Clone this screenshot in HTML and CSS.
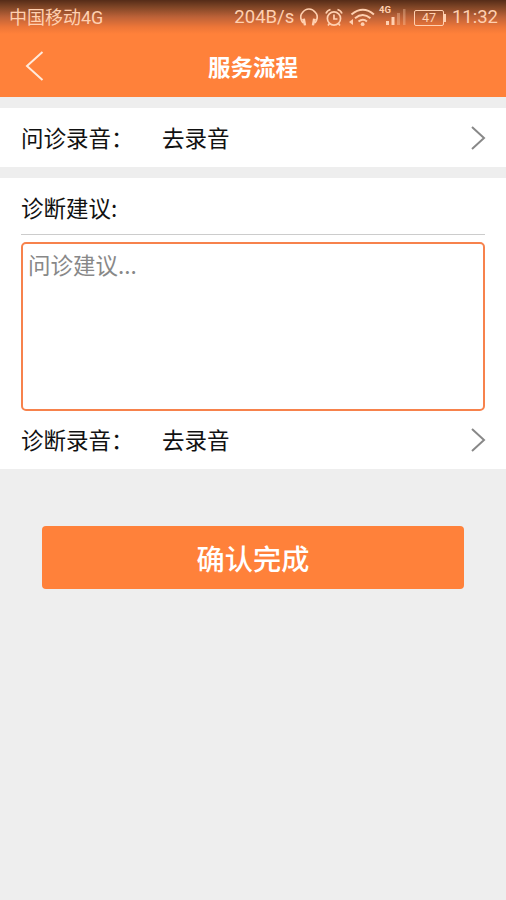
FILE: index.html
```html
<!DOCTYPE html>
<html lang="zh-CN">
<head>
<meta charset="utf-8">
<title>服务流程</title>
<link rel="stylesheet" href="styles.css">
</head>
<body>
<header class="header">
  <div class="status">
    <span class="carrier">中国移动4G</span>
    <span class="speed">204B/s</span>
    <svg class="headset" width="18" height="20" viewBox="0 0 18 20"><path d="M3 15C.2 11 .2 7 2.500 4.500C6-.2 12-.2 15.500 4.500C17.800 7 17.800 11 15 15" fill="none" stroke="currentColor" stroke-width="1.600"/><path d="M2 11l3-.6 1.200 6.800-2.300.4zM16 11l-3-.6-1.200 6.800 2.300.4z" fill="currentColor"/></svg>
    <svg class="alarm" width="18" height="20" viewBox="0 0 18 20" fill="none" stroke="currentColor" stroke-width="1.700"><circle cx="9" cy="10.500" r="6.600"/><path d="M9 6.500v4.500h3.500M1 5.500Q2 2.500 5.500 1.500M17 5.500Q16 2.500 12.500 1.500M4.500 15.500L3 17.500M13.500 15.500l1.500 2"/></svg>
    <svg class="wifi" width="26" height="20" viewBox="0 0 26 20"><path d="M2.500 6.500Q14 -3 25 6.500M6 10.200Q14 3.700 21.500 10.200M9.500 13.500Q14 10 18 13.500" fill="none" stroke="currentColor" stroke-width="2"/><circle cx="13.700" cy="16.200" r="1.900" fill="currentColor"/><path d="M0 14l4-3v6z" fill="currentColor"/></svg>
    <span class="mobile"><span class="net">4G</span><svg width="27" height="18" viewBox="0 0 27 18" fill="currentColor"><path d="M7 12h3v4H7zM12.500 8h3v8h-3z"/><path opacity=".35" d="M18 4h3v12h-3zM24 0h2.500v16H24z"/></svg></span>
    <span class="battery">47</span>
    <span class="clock">11:32</span>
  </div>
  <div class="navbar">
    <svg class="back" width="20" height="32" viewBox="0 0 20 32"><path d="M17.500 2L2 16l15.500 14" fill="none" stroke="currentColor" stroke-width="2"/></svg>
    <h1 class="title">服务流程</h1>
  </div>
</header>
<main>
  <section class="card row">
    <span class="label">问诊录音：</span><span class="value">去录音</span>
    <svg class="arrow" width="16" height="26" viewBox="0 0 16 26"><path d="M2 2l12 11L2 24"/></svg>
  </section>
  <section class="card advice">
    <label class="heading" for="advice">诊断建议:</label>
    <textarea id="advice" class="input" placeholder="问诊建议..."></textarea>
    <div class="row record">
      <span class="label">诊断录音：</span><span class="value">去录音</span>
      <svg class="arrow" width="16" height="26" viewBox="0 0 16 26"><path d="M2 2l12 11L2 24"/></svg>
    </div>
  </section>
  <button class="submit">确认完成</button>
</main>
</body>
</html>
```
FILE: styles.css
```css
* { box-sizing: border-box; }
body {
  margin: 0;
  min-height: 900px;
  background: #eee;
  color: #111;
  font: 22.5px/32px "Noto Sans CJK SC", sans-serif;
}
.header {
  height: 97px;
  background: linear-gradient(#552c18 0, #7f4526 7px, #bd6238 17px, #ed7638 27px, #ff813a 34px);
}
.status {
  display: flex;
  height: 35px;
  padding: 0 8px 0 9px;
  align-items: center;
  color: #ffd0b0;
  font: 18.5px/35px Roboto, "Noto Sans CJK SC", sans-serif;
  white-space: nowrap;
}
.carrier { width: 226px; font-size: 18px; }
.speed { width: 66px; }
.headset { margin-right: 7px; }
.alarm { margin-right: 6px; }
.wifi { margin-right: 4px; }
.mobile { position: relative; height: 18px; width: 27px; margin: 0 8px 0 0; }
.mobile svg { display: block; }
.net { position: absolute; left: 0; top: -5px; font: bold 9.5px/12px Roboto, sans-serif; }
.battery {
  position: relative;
  width: 30px;
  height: 16px;
  margin-right: 8px;
  border: 1.5px solid;
  border-radius: 2px;
  font-size: 12.5px;
  line-height: 14px;
  text-align: center;
}
.battery::after {
  content: "";
  position: absolute;
  right: -3px;
  top: 3px;
  width: 2px;
  height: 8px;
  background: currentColor;
}
.navbar {
  display: grid;
  grid-template-columns: 60px 1fr 60px;
  height: 61px;
  align-items: center;
  color: #fff;
}
.back { margin-left: 25px; color: #ffeadb; }
.title { margin: 0; text-align: center; font-size: 22.5px; font-weight: 700; }
.card { background: #fff; padding: 0 21px; margin-top: 11px; }
.row { display: flex; align-items: center; height: 59px; }
.label, .value { padding-bottom: 2px; }
.label { width: 141px; white-space: nowrap; }
.arrow { margin: 0 -1px 0 auto; fill: none; stroke: #888; stroke-width: 2; }
.advice { height: 291px; }
.record { height: 57px; }
.heading { display: block; height: 57px; line-height: 59px; border-bottom: 1px solid #ccc; }
.input {
  display: block;
  width: 100%;
  height: 169px;
  margin-top: 7px;
  padding: 4px 5px;
  border: 2px solid #f7824c;
  border-radius: 5px;
  background: #fff;
  font: inherit;
  resize: none;
  outline: 0;
}
.input::placeholder { color: #888; opacity: 1; }
.submit {
  display: block;
  width: 422px;
  height: 63px;
  margin: 56.5px auto 0;
  padding: 1px 0 0;
  border: 0;
  border-radius: 4px;
  background: #ff813a;
  color: #fff;
  font: 500 28.2px/62px "Noto Sans CJK SC", sans-serif;
}
```
